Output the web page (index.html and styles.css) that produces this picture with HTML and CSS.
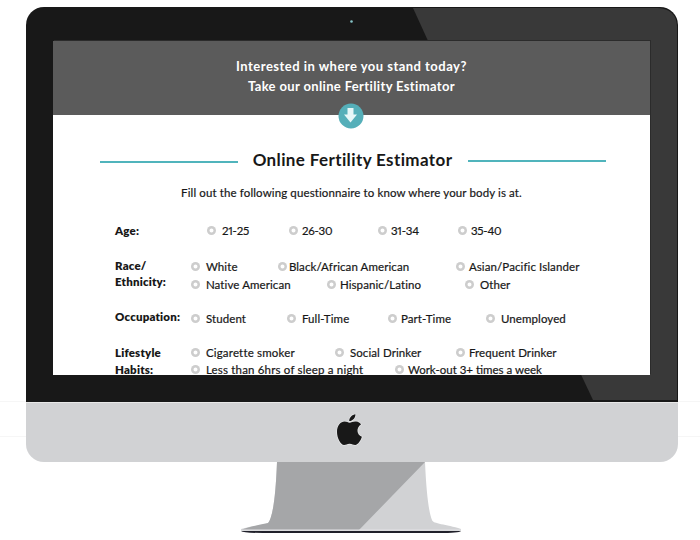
FILE: index.html
```
<!DOCTYPE html>
<html lang="en">
<head>
<meta charset="utf-8">
<title>Online Fertility Estimator</title>
<link rel="stylesheet" href="styles.css">
</head>
<body>
<main class="stage">
  <div class="monitor">
    <div class="bezel">
      <svg class="glare" viewBox="0 0 652 395" aria-hidden="true">
        <path d="M387 1H632Q650 2 651 19V393H567L542 340Z" fill="#393939"/>
        <circle cx="325.500" cy="14.500" r="1.300" fill="#87c5c9"/>
      </svg>
      <section class="screen">
        <header class="banner">
          <p class="b1">Interested in where you stand today?</p>
          <p class="b2">Take our online Fertility Estimator</p>
          <svg class="arrow" viewBox="0 0 26 26" aria-hidden="true"><circle cx="13" cy="13" r="12.500" fill="#55afb9"/><path d="M9.500 5h6v6.500h3.500l-6.500 8-6.500-8h3.500z" fill="#e7f7f8"/></svg>
        </header>
        <div class="title"><i class="rule left"></i><h1>Online Fertility Estimator</h1><i class="rule right"></i></div>
        <p class="intro">Fill out the following questionnaire to know where your body is at.</p>
        <div class="form">
          <div class="group age">
            <b>Age:</b>
            <div class="options o1"><label><i></i>21-25</label><label class="near"><i></i>26-30</label><label class="near"><i></i>31-34</label><label class="near"><i></i>35-40</label></div>
          </div>
          <div class="group race">
            <b>Race/<br>Ethnicity:</b>
            <div>
              <div class="options o2"><label><i></i>White</label><label class="tight"><i></i>Black/African American</label><label class="near"><i></i>Asian/Pacific Islander</label></div>
              <div class="options o3"><label><i></i>Native American</label><label class="near"><i></i>Hispanic/Latino</label><label><i></i>Other</label></div>
            </div>
          </div>
          <div class="group job">
            <b>Occupation:</b>
            <div class="options o4"><label><i></i>Student</label><label><i></i>Full-Time</label><label class="near"><i></i>Part-Time</label><label><i></i>Unemployed</label></div>
          </div>
          <div class="group habits">
            <b>Lifestyle<br>Habits:</b>
            <div>
              <div class="options o5"><label class="wide"><i></i>Cigarette smoker</label><label><i></i>Social Drinker</label><label class="near"><i></i>Frequent Drinker</label></div>
              <div class="options o6"><label class="wide"><i></i>Less than 6hrs of sleep a night</label><label class="near dense"><i></i>Work-out 3+ times a week</label></div>
            </div>
          </div>
        </div>
      </section>
    </div>
    <div class="chin">
      <svg class="apple" viewBox="0 0 30 34" aria-hidden="true"><path d="M14.500 8.800c2 0 3.500-1.500 6.500-1.200 2.400.2 4 1.300 5 2.900-5.100 3.200-4.500 10.200.9 12.300-1 3.200-3.700 8.200-6.700 8.200-2.100 0-2.900-1.300-5.600-1.300-2.600 0-3.500 1.300-5.500 1.300C5.700 31 2 24.200 2 18 2 11.300 5.700 7.600 9.600 7.600c2.100 0 3.600 1.200 4.900 1.200zM14.200 7c0-3.300 3-6.600 6.200-6.800.3 3.500-2.900 6.900-6.200 6.800z" fill="#181818" stroke="#e8e9ea" stroke-width="1.400" paint-order="stroke"/></svg>
    </div>
  </div>
  <svg class="stand" viewBox="0 0 224 72" aria-hidden="true">
    <path d="M38 0H186Q188 46 193 58C194 62 207 62 222 67V69H2V67C17 63 29 63 30 60Q36 49 38 0Z" fill="#d1d2d4"/>
    <path d="M38 0H186L120 68H2Q8 65 29 61Q36 53 38 0Z" fill="#a5a6a8"/>
    <path d="M2 68H222" stroke="#e3e3e6"/>
    <path d="M2 69H222Q220 71 200 71H24Q4 71 2 69Z" fill="#20202a"/>
  </svg>
</main>
</body>
</html>
```
FILE: styles.css
```
*{box-sizing:border-box}
body{margin:0;background:#fff;font-family:Lato,"Liberation Sans",sans-serif;color:#181818}
p,h1{margin:0}
.stage{width:700px;height:540px;overflow:hidden;padding-top:7px;display:flex;flex-direction:column;align-items:center;background:linear-gradient(#f6f6f6,#f6f6f6) 0 401px/100% 1px no-repeat,linear-gradient(#f6f6f6,#f6f6f6) 0 436px/100% 1px no-repeat,#fff}
.monitor{width:652px;margin-left:3px}
.bezel{position:relative;height:395px;border-radius:18px 18px 0 0;background:#181818;padding:34px 28px 0 27px;overflow:hidden}
.glare{position:absolute;left:0;top:0;width:652px;height:395px}
.screen{position:relative;height:334px;background:#fff;box-shadow:1px -1px #2b2b2b;overflow:hidden}
.banner{position:relative;height:74px;background:#5b5b5b;color:#fff;text-align:center;font-weight:700;font-size:13px;line-height:20px;padding:15px 0 0 1px}
.b1{letter-spacing:.48px}
.b2{letter-spacing:.36px}
.arrow{position:absolute;left:285.5px;top:61.5px;width:26px;height:26px}
.title{display:flex;align-items:center;height:28px;margin:31px 44px 0 47px;justify-content:space-between}
.title h1{font-size:17px;line-height:28px;font-weight:700;white-space:nowrap;letter-spacing:.38px}
.rule{width:138px;height:2px;background:#50b4bc}
.left{margin-top:4px}
.right{margin-top:1px}
.intro{text-align:center;font-size:11.5px;line-height:16px;margin-top:11px;padding-left:1px;letter-spacing:.12px;-webkit-text-stroke:.2px}
.form{padding-left:62.5px;font-size:11.5px;white-space:nowrap;letter-spacing:.1px}
.group{display:grid;grid-template-columns:75.5px 1fr}
.group b{font-weight:800;line-height:15px;letter-spacing:.18px}
.options{display:grid;line-height:17px;-webkit-text-stroke:.2px}
.options label{display:flex;align-items:center;gap:6.4px}
.options i{width:9px;height:9px;box-shadow:inset 0 0 0 2.5px #cdcdcd;border-radius:50%;flex:none}
.options .near{gap:4.4px}
.options .tight{gap:2.4px}
.options .wide{letter-spacing:.18px}
.options .dense{letter-spacing:0}
.age{margin-top:21px;height:36px}
.age b{line-height:17px}
.o1{height:17px;padding-left:16px;grid-template-columns:82px 89px 80px 1fr;font-feature-settings:"pnum";letter-spacing:-.2px}
.race{height:51px}
.race b{line-height:15.5px}
.o2{grid-template-columns:87px 178px 1fr}
.o3{height:18px;grid-template-columns:136px 138px 1fr}
.job{height:35px}
.o4{height:19px;grid-template-columns:96px 101px 98px 1fr}
.o5{grid-template-columns:144px 121px 1fr}
.o6{grid-template-columns:204px 1fr}
.habits b{line-height:17px}
.chin{height:60px;background:#d1d2d4;border-top:1px solid #e8e8e8;border-radius:0 0 18px 18px;display:flex;justify-content:center;padding-top:11px}
.apple{width:30px;height:34px;margin-right:3px}
.stand{width:224px;height:72px;margin-left:2px;flex:none}
```
